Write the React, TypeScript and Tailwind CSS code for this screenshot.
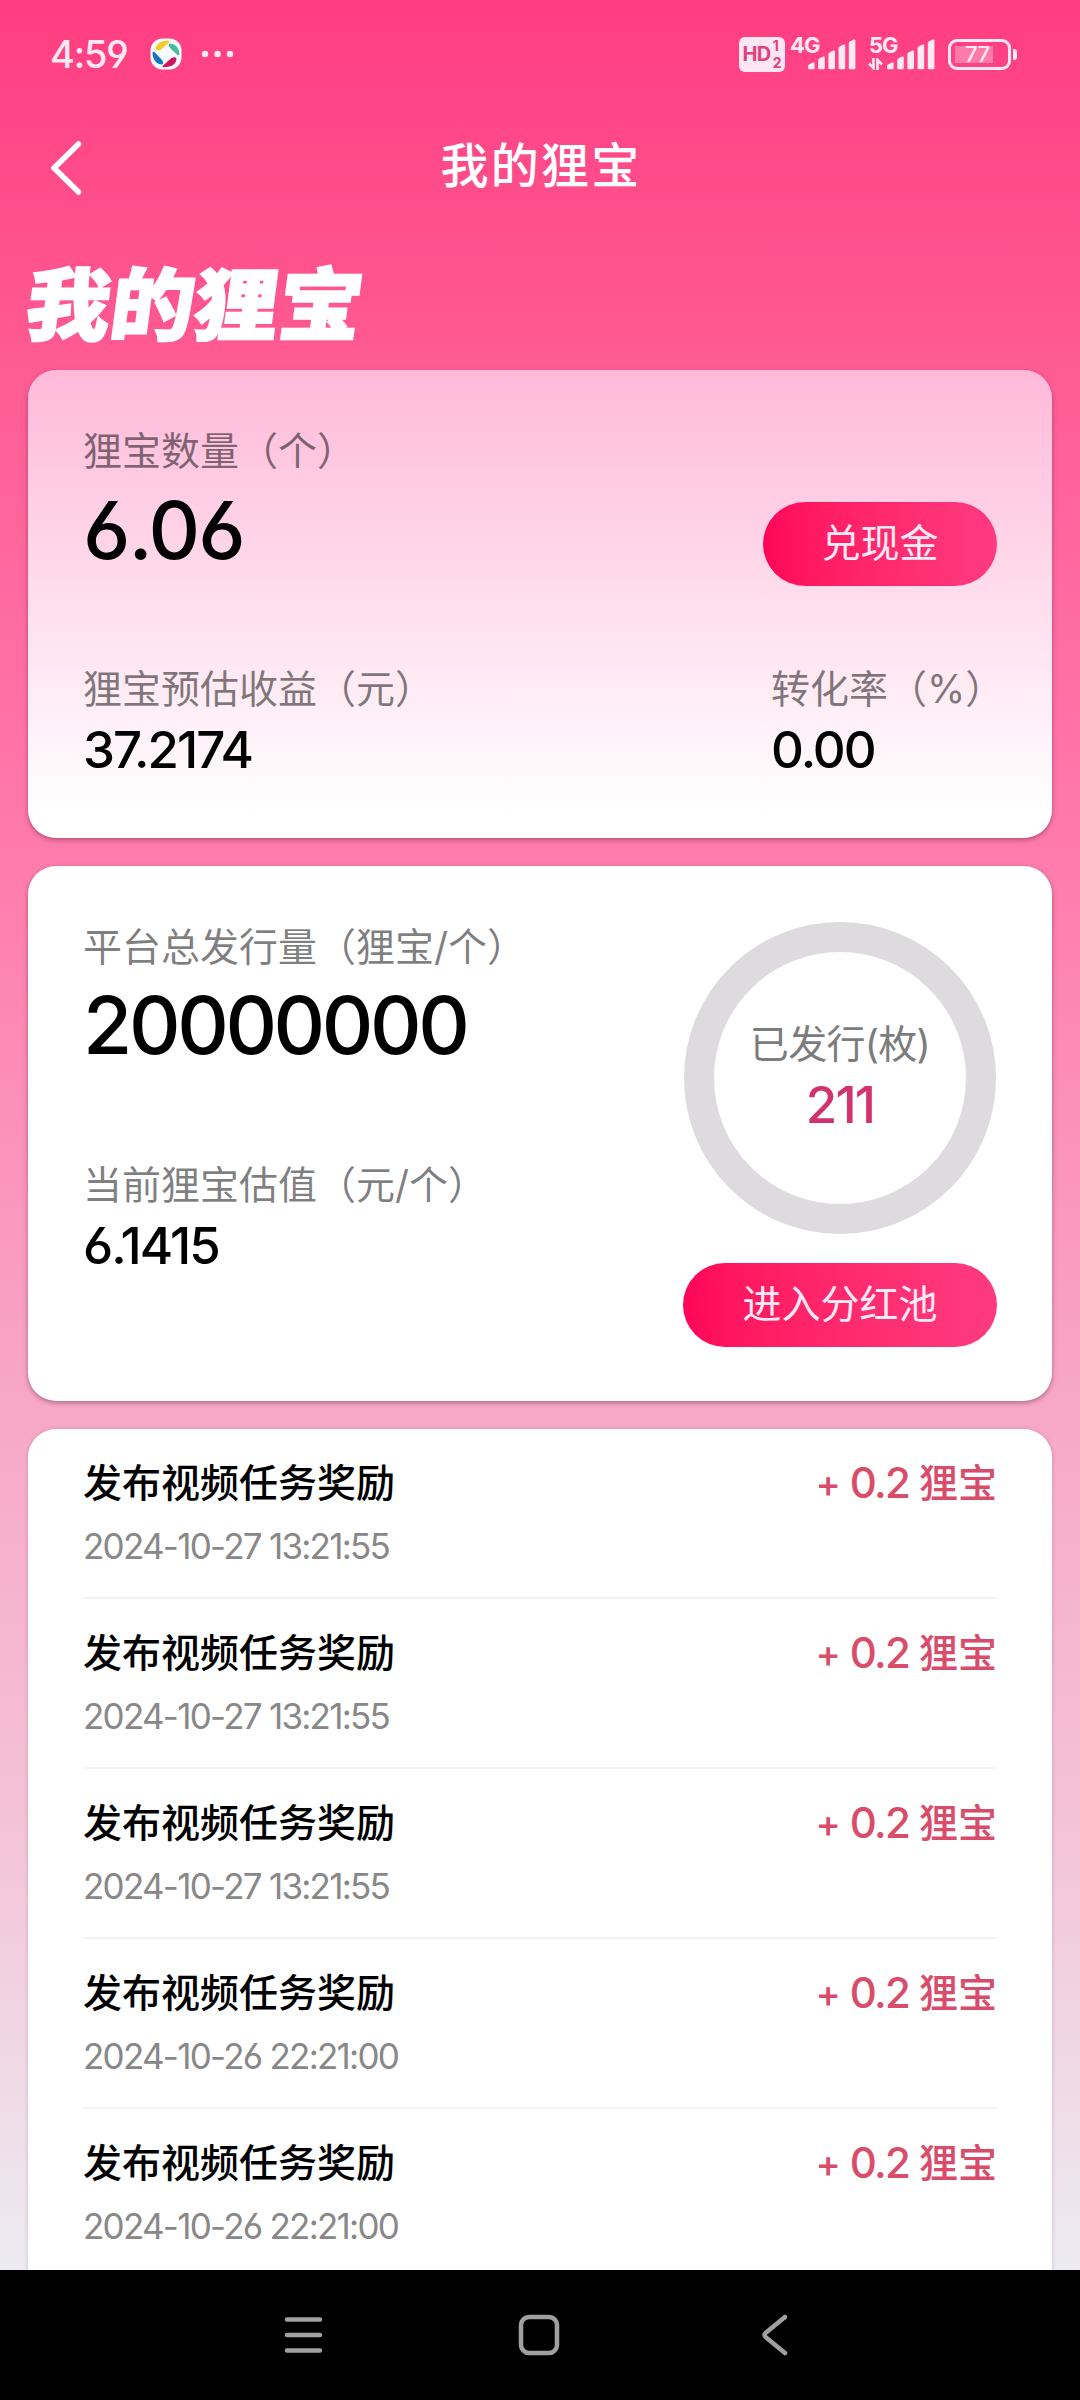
interface Reward {
  title: string;
  time: string;
  amount: string;
}

const REWARDS: Reward[] = [
  { title: "发布视频任务奖励", time: "2024-10-27 13:21:55", amount: "0.2" },
  { title: "发布视频任务奖励", time: "2024-10-27 13:21:55", amount: "0.2" },
  { title: "发布视频任务奖励", time: "2024-10-27 13:21:55", amount: "0.2" },
  { title: "发布视频任务奖励", time: "2024-10-26 22:21:00", amount: "0.2" },
  { title: "发布视频任务奖励", time: "2024-10-26 22:21:00", amount: "0.2" },
];

/* Bar tops, left to right; every bar ends on the same baseline. */
const BARS = [24, 18, 12, 6, 1];

function SignalBars() {
  return (
    <svg width="48" height="31" viewBox="0 0 48 31" fill="currentColor" aria-hidden="true">
      {BARS.map((top, i) => (
        <path
          key={top}
          d={`M${i * 10.2} 30V${top + 3}q0 -1 1 -1.5l4 -2q1.6 -.4 1.6 1V29q0 1.2 -1.2 1.2h-4.2q-1.2 0 -1.2 -1.2z`}
        />
      ))}
    </svg>
  );
}

function StatusBar() {
  return (
    <div className="h-[108px] shrink-0 pl-[50px] pr-[63px] flex items-center text-[#ffe9f3]">
      <span className="w-[80px] text-[38px] leading-[40px] font-medium tracking-[-1.2px] whitespace-nowrap">4:59</span>
      <svg className="ml-[20px]" width="32" height="32" viewBox="0 0 32 32" aria-hidden="true">
        <rect x="0.5" y="0.5" width="31" height="31" rx="12" fill="#f6fbff" />
        <path d="M5.5 10C7 5.500 11 2.500 18.500 2.500L19.500 4L10.500 12C8 13 6 12.500 5.500 10z" fill="#f4cb2c" />
        <path d="M19.500 5.500C24.500 5.500 29 9 29.500 16.500L28 17.500L20 10C18.500 8 18.500 6.500 19.500 5.500z" fill="#45bd98" />
        <path d="M26.500 21C26 26 21.500 29.500 13 29.200L12.500 28L21.500 20C24 18.800 26 19 26.500 21z" fill="#cf145c" />
        <path d="M12 26.500C7 26.500 2.500 22 2.500 14.500L4 13.500L12 22C13.500 24 13.500 25.500 12 26.500z" fill="#1a74c4" />
      </svg>
      <svg className="ml-[18px]" width="36" height="8" viewBox="0 0 36 8" fill="currentColor" aria-hidden="true">
        <circle cx="5" cy="4" r="3.2" />
        <circle cx="17.500" cy="4" r="3.2" />
        <circle cx="30" cy="4" r="3.2" />
      </svg>

      <div className="ml-auto flex items-center">
        <div className="w-[46px] h-[35px] rounded-[6px] bg-[#ffe6f4] text-[#e0417c] flex items-center justify-center gap-[2px]">
          <span className="text-[20px] font-bold leading-none tracking-[-0.5px]">HD</span>
          <span className="flex flex-col text-[14px] font-bold leading-none gap-[3px]">
            <span>1</span>
            <span>2</span>
          </span>
        </div>
        <div className="relative ml-[23px] h-[31px]">
          <span className="absolute left-[-18px] top-[-5px] text-[22px] leading-[22px] font-bold tracking-[-1px]">4G</span>
          <SignalBars />
        </div>
        <div className="relative ml-[31px] h-[31px]">
          <span className="absolute left-[-18px] top-[-5px] text-[22px] leading-[22px] font-bold tracking-[-1px]">5G</span>
          <svg className="absolute left-[-19px] top-[19px]" width="15" height="12" viewBox="0 0 15 12" fill="none" stroke="currentColor" strokeWidth="2.6" aria-hidden="true">
            <path d="M5.500 0V10L1 5.500" />
            <path d="M9.500 12V2L14 6.500" />
          </svg>
          <SignalBars />
        </div>
        <div className="ml-[13px] w-[63px] h-[31px] rounded-[9px] border-[3px] border-current p-[4px] flex">
          <div className="relative h-full w-[38px] bg-white/30">
            <span className="absolute left-[10px] top-[-3px] text-[22px] leading-[23px] font-medium tracking-[-0.5px]">77</span>
          </div>
        </div>
        <div className="ml-[2px] w-[4px] h-[11px] rounded-r-[3px] bg-current" />
      </div>
    </div>
  );
}

function Label({ children }: { children: string }) {
  return <p className="text-[39px] leading-[50px] text-black/50 whitespace-nowrap">{children}</p>;
}

function Value({ children }: { children: string }) {
  return <p className="mt-[6px] text-[51px] leading-[60px] text-black font-[450] tracking-[-1.9px] whitespace-nowrap">{children}</p>;
}

function BigValue({ className, children }: { className: string; children: string }) {
  return <p className={`text-[80px] leading-[90px] text-black font-[450] whitespace-nowrap ${className}`}>{children}</p>;
}

function PillButton({ className, children }: { className: string; children: string }) {
  return (
    <button
      type="button"
      className={`h-[84px] rounded-full bg-gradient-to-r from-[#ff0459] to-[#ff3a80] text-[#ffeaf5] text-[39px] leading-[50px] pb-[2px] flex items-center justify-center ${className}`}
    >
      {children}
    </button>
  );
}

function RewardRow({ reward }: { reward: Reward }) {
  return (
    <li className="h-[170px] shrink-0 border-b-2 border-[#f4f4f4] pt-[28px]">
      <div className="flex items-center justify-between h-[52px]">
        <span className="text-[39px] leading-[52px] font-medium text-black">{reward.title}</span>
        <span className="text-[39px] leading-[52px] font-medium text-[#d94c6a] flex items-center">
          <span className="text-[38px]">+</span>
          <span className="text-[42px] ml-[9px] mr-[10px] tracking-[-1.8px]">{reward.amount}</span>
          狸宝
        </span>
      </div>
      <p className="mt-[17px] text-[35px] leading-[40px] text-[#888888] tracking-[-1.75px]">{reward.time}</p>
    </li>
  );
}

export default function App() {
  return (
    <div className="w-[1080px] h-[2400px] flex flex-col overflow-hidden bg-[#ededf2] font-[Inter,'Noto_Sans_CJK_SC',sans-serif] [font-feature-settings:'cv03','cv04']">
      <div className="h-[2270px] shrink-0 flex flex-col overflow-hidden bg-[linear-gradient(to_bottom,#ff3d80_0%,#ff5b93_16%,#ff7aaa_37%,#f8a6c6_61%,#f4c2d6_80%,#ecebf1_100%)]">
        <StatusBar />

        <header className="h-[112px] shrink-0 grid grid-cols-[1fr_auto_1fr] items-center pl-[50px] text-white">
          <button type="button" aria-label="返回" className="mt-[8px]">
            <svg width="32" height="54" viewBox="0 0 32 54" fill="none" stroke="currentColor" strokeWidth="5.5" strokeLinecap="round" strokeLinejoin="round" aria-hidden="true">
              <path d="M28.500 3L4 27L28.500 51" />
            </svg>
          </button>
          <h1 className="mt-[3px] text-[48px] leading-[60px] tracking-[2.3px] -ml-[48px] font-medium">我的狸宝</h1>
        </header>

        <h2 className="h-[150px] shrink-0 pt-[38px] pl-[27px] text-[84px] leading-[96px] font-black text-white">
          <span className="inline-block origin-center -skew-x-[7deg] scale-y-[0.94] [-webkit-text-stroke:2px_white]">我的狸宝</span>
        </h2>

        <main className="px-[28px] flex flex-col gap-[28px]">
          <section className="h-[468px] shrink-0 rounded-[28px] px-[55px] pt-[56px] bg-gradient-to-b from-[#ffb9d9] to-white to-95% shadow-[0_2px_5px_rgba(90,30,60,0.45)]">
            <div className="flex justify-between h-[160px]">
              <div>
                <Label>狸宝数量（个）</Label>
                <BigValue className="mt-[9px] tracking-[-2px]">6.06</BigValue>
              </div>
              <PillButton className="w-[234px] mt-[76px]">兑现金</PillButton>
            </div>
            <div className="flex justify-between mt-[78px]">
              <div>
                <Label>狸宝预估收益（元）</Label>
                <Value>37.2174</Value>
              </div>
              <div className="w-[226px]">
                <Label>转化率（%）</Label>
                <Value>0.00</Value>
              </div>
            </div>
          </section>

          <section className="h-[535px] shrink-0 rounded-[28px] px-[55px] pt-[56px] bg-white shadow-[0_2px_5px_rgba(90,30,60,0.45)] flex justify-between">
            <div>
              <Label>平台总发行量（狸宝/个）</Label>
              <BigValue className="mt-[8px] tracking-[-3.4px]">20000000</BigValue>
              <div className="mt-[90px]">
                <Label>当前狸宝估值（元/个）</Label>
                <Value>6.1415</Value>
              </div>
            </div>
            <div className="w-[314px] flex flex-col items-center">
              <div className="w-[312px] h-[312px] rounded-full border-[30px] border-[#dedbde] flex flex-col items-center justify-center">
                <p className="text-[39px] leading-[50px] text-[#7c7c7c] whitespace-nowrap tracking-[-0.7px]">已发行(枚)</p>
                <p className="mt-[6px] mb-[2px] text-[51px] leading-[60px] font-[450] text-[#d4326f] tracking-[-1.8px]">211</p>
              </div>
              <PillButton className="w-[314px] mt-[29px]">进入分红池</PillButton>
            </div>
          </section>

          <ul className="rounded-t-[28px] bg-white px-[55px] flex flex-col shrink-0 shadow-[0_0_4px_rgba(90,30,60,0.2)]">
            {REWARDS.map((reward, i) => (
              <RewardRow key={i} reward={reward} />
            ))}
          </ul>
        </main>
      </div>

      <nav className="h-[130px] shrink-0 bg-black text-[#a0a0a0] flex items-center pl-[284px]">
        <svg width="39" height="36" viewBox="0 0 39 36" stroke="currentColor" strokeWidth="4.500" strokeLinecap="round" aria-hidden="true">
          <path d="M3 2.500H36M3 18H36M3 33.500H36" />
        </svg>
        <svg className="ml-[195px]" width="42" height="42" viewBox="0 0 42 42" fill="none" stroke="currentColor" strokeWidth="4.500" aria-hidden="true">
          <rect x="3" y="3" width="36" height="36" rx="8" />
        </svg>
        <svg className="ml-[200px]" width="30" height="42" viewBox="0 0 30 42" fill="none" stroke="currentColor" strokeWidth="4.500" strokeLinecap="round" strokeLinejoin="round" aria-hidden="true">
          <path d="M25 3L5.500 19Q3.500 21 5.500 23L25 39" />
        </svg>
      </nav>
    </div>
  );
}
